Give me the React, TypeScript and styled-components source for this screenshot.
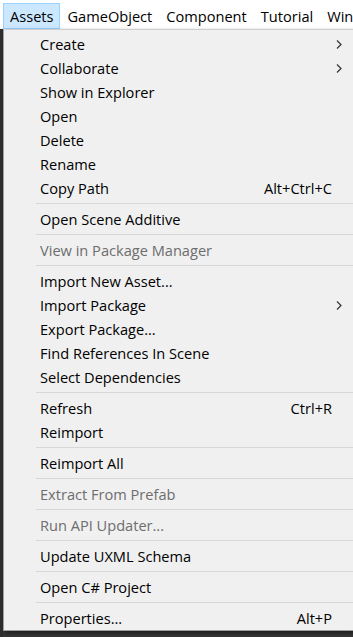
import React from "react";
import styled, { createGlobalStyle } from "styled-components";

const Global = createGlobalStyle`
  html, body { margin: 0; padding: 0; background: #353535; }
  body { font-family: "Open Sans", "Noto Sans", "Liberation Sans", sans-serif; }
  * { box-sizing: border-box; }
`;

const Page = styled.div`
  width: 353px;
  height: 637px;
  overflow: hidden;
  display: flex;
  flex-direction: column;
  background: #353535;
`;

const MenuBar = styled.div`
  height: 29px;
  flex: none;
  display: flex;
  align-items: stretch;
  background: #ffffff;
  padding: 3px 0 0 3px;
  white-space: nowrap;
  overflow: hidden;
`;

const BarItem = styled.div<{ $active?: boolean }>`
  display: flex;
  align-items: center;
  padding: 0 5px 1px 6px;
  margin-right: 1px;
  font-size: 14.6px;
  color: #000;
  border: 1px solid ${(p) => (p.$active ? "#99d1ff" : "transparent")};
  background: ${(p) => (p.$active ? "#cce8ff" : "transparent")};
`;

const Body = styled.div`
  flex: 1;
  display: flex;
  min-height: 0;
`;

const Strip = styled.div`
  width: 3px;
  flex: none;
  background: #2e2e2e;
`;

const Panel = styled.div`
  flex: 1;
  align-self: flex-start;
  background: #f0f0f0;
  border-left: 1px solid #a0a0a0;
  border-top: 1px solid #cfcfcf;
  border-bottom: 1px solid #a0a0a0;
  padding: 2px 0 0;
  box-shadow: 2px 2px 4px rgba(0, 0, 0, 0.5);
`;

const Item = styled.div<{ $disabled?: boolean }>`
  height: 24px;
  display: grid;
  grid-template-columns: 1fr auto 21px;
  align-items: center;
  padding-left: 36px;
  font-size: 14.6px;
  color: ${(p) => (p.$disabled ? "#6d6d6d" : "#000")};
  white-space: nowrap;
`;

const Label = styled.span``;

const Shortcut = styled.span``;

const ArrowCell = styled.span`
  display: flex;
  justify-content: flex-end;
  padding-right: 11px;
`;

const Separator = styled.div`
  height: 7px;
  display: flex;
  align-items: center;
  padding-left: 32px;
  &::after {
    content: "";
    flex: 1;
    height: 1px;
    background: #d7d7d7;
  }
`;

type Entry =
  | { sep: true }
  | { label: string; shortcut?: string; sub?: boolean; disabled?: boolean };

const entries: Entry[] = [
  { label: "Create", sub: true },
  { label: "Collaborate", sub: true },
  { label: "Show in Explorer" },
  { label: "Open" },
  { label: "Delete" },
  { label: "Rename" },
  { label: "Copy Path", shortcut: "Alt+Ctrl+C" },
  { sep: true },
  { label: "Open Scene Additive" },
  { sep: true },
  { label: "View in Package Manager", disabled: true },
  { sep: true },
  { label: "Import New Asset..." },
  { label: "Import Package", sub: true },
  { label: "Export Package..." },
  { label: "Find References In Scene" },
  { label: "Select Dependencies" },
  { sep: true },
  { label: "Refresh", shortcut: "Ctrl+R" },
  { label: "Reimport" },
  { sep: true },
  { label: "Reimport All" },
  { sep: true },
  { label: "Extract From Prefab", disabled: true },
  { sep: true },
  { label: "Run API Updater...", disabled: true },
  { sep: true },
  { label: "Update UXML Schema" },
  { sep: true },
  { label: "Open C# Project" },
  { sep: true },
  { label: "Properties...", shortcut: "Alt+P" },
];

const Chevron = () => (
  <svg width="6" height="9" viewBox="0 0 6 9">
    <polyline points="1,0.5 5,4.5 1,8.5" fill="none" stroke="#333" strokeWidth="1.2" />
  </svg>
);

export default function App() {
  return (
    <>
      <Global />
      <Page>
        <MenuBar>
          <BarItem $active>Assets</BarItem>
          <BarItem>GameObject</BarItem>
          <BarItem>Component</BarItem>
          <BarItem>Tutorial</BarItem>
          <BarItem>Window</BarItem>
        </MenuBar>
        <Body>
          <Strip />
          <Panel>
            {entries.map((e, i) =>
              "sep" in e ? (
                <Separator key={i} />
              ) : (
                <Item key={i} $disabled={e.disabled}>
                  <Label>{e.label}</Label>
                  <Shortcut>{e.shortcut}</Shortcut>
                  <ArrowCell>{e.sub ? <Chevron /> : null}</ArrowCell>
                </Item>
              )
            )}
          </Panel>
        </Body>
      </Page>
    </>
  );
}
